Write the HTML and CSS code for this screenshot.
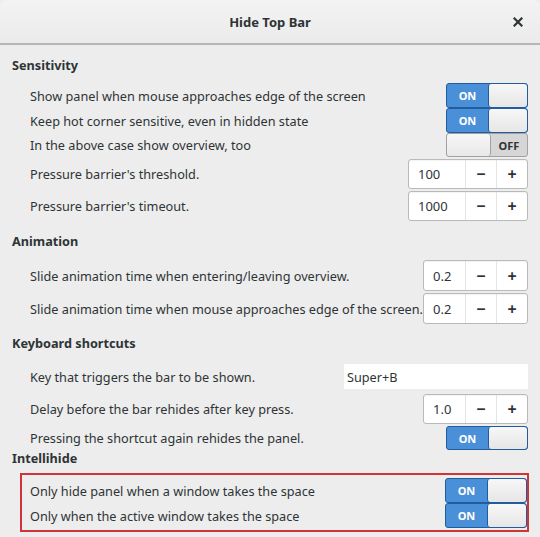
FILE: index.html
```html
<!DOCTYPE html>
<html>
<head>
<meta charset="utf-8">
<link rel="stylesheet" href="styles.css">
</head>
<body>
<div class="window">
  <div class="titlebar">
    <span class="title">Hide Top Bar</span>
    <svg class="close" width="10" height="10" viewBox="0 0 10 10"><path d="M1.5 1.5 L8.5 8.5 M8.5 1.5 L1.5 8.5" stroke="#2e3436" stroke-width="2.2" stroke-linecap="square"/></svg>
  </div>
  <div class="content">
    <div class="heading h-sens">Sensitivity</div>
    <div class="row r-sw first-sw"><span class="label">Show panel when mouse approaches edge of the screen</span><div class="switch on"><span class="slot">ON</span><span class="knob"></span></div></div>
    <div class="row r-sw"><span class="label">Keep hot corner sensitive, even in hidden state</span><div class="switch on"><span class="slot">ON</span><span class="knob"></span></div></div>
    <div class="row r-sw r-off"><span class="label">In the above case show overview, too</span><div class="switch off"><span class="knob"></span><span class="slot">OFF</span></div></div>
    <div class="row r-spin s1"><span class="label">Pressure barrier's threshold.</span><div class="spin wide"><span class="val">100</span><span class="btn">−</span><span class="btn">+</span></div></div>
    <div class="row r-spin s2"><span class="label">Pressure barrier's timeout.</span><div class="spin wide"><span class="val">1000</span><span class="btn">−</span><span class="btn">+</span></div></div>

    <div class="heading h-anim">Animation</div>
    <div class="row r-spin31 s3"><span class="label">Slide animation time when entering/leaving overview.</span><div class="spin"><span class="val">0.2</span><span class="btn">−</span><span class="btn">+</span></div></div>
    <div class="row r-spin31 s2"><span class="label">Slide animation time when mouse approaches edge of the screen.</span><div class="spin"><span class="val">0.2</span><span class="btn">−</span><span class="btn">+</span></div></div>

    <div class="heading h-key">Keyboard shortcuts</div>
    <div class="row r-entry"><span class="label">Key that triggers the bar to be shown.</span><div class="entry">Super+B</div></div>
    <div class="row r-spin s4"><span class="label">Delay before the bar rehides after key press.</span><div class="spin"><span class="val">1.0</span><span class="btn">−</span><span class="btn">+</span></div></div>
    <div class="row r-sw s2 last-sw"><span class="label">Pressing the shortcut again rehides the panel.</span><div class="switch on"><span class="slot">ON</span><span class="knob"></span></div></div>

    <div class="heading h-intel">Intellihide</div>
    <div class="highlight">
      <div class="row r-sw hl"><span class="label">Only hide panel when a window takes the space</span><div class="switch on"><span class="slot">ON</span><span class="knob"></span></div></div>
      <div class="row r-sw hl"><span class="label">Only when the active window takes the space</span><div class="switch on"><span class="slot">ON</span><span class="knob"></span></div></div>
    </div>
  </div>
</div>
</body>
</html>
```
FILE: styles.css
```css
html, body {
  margin: 0;
  padding: 0;
  background: #ededed;
}
body {
  width: 540px;
  height: 537px;
  overflow: hidden;
  font-family: "Noto Sans", "DejaVu Sans", sans-serif;
  font-size: 12.7px;
  color: #2e3436;
}
.window {
  width: 540px;
  height: 537px;
  background: #ededed;
  border-radius: 6px 6px 0 0;
  overflow: hidden;
}
.titlebar {
  height: 43px;
  border-bottom: 2px solid #b6b6b6;
  background: linear-gradient(#f3f3f3, #ebebeb);
  display: flex;
  align-items: center;
  justify-content: center;
  position: relative;
}
.title {
  font-weight: bold;
  font-size: 13px;
  color: #2e3436;
}
.close {
  position: absolute;
  right: 17px;
  top: 17px;
}
.content {
  display: flex;
  flex-direction: column;
}
.heading {
  font-weight: bold;
  padding-left: 12px;
  height: 20px;
  line-height: 20px;
}
.h-sens { margin-top: 10px; }
.h-anim { margin-top: 10px; }
.h-key { margin-top: 9px; }
.h-intel { height: 16px; line-height: 16px; }
.row {
  display: flex;
  align-items: center;
  justify-content: space-between;
  padding-left: 30px;
  padding-right: 12px;
}
.label { white-space: nowrap; }
.r-sw { height: 25px; }
.r-off { height: 24px; }
.first-sw { margin-top: 8px; }
.last-sw { height: 24px; }
.r-spin { height: 30px; }
.r-spin31 { height: 31px; }
.r-entry { height: 25px; margin-top: 11px; }
.s1 { margin-top: 2px; }
.s2 { margin-top: 2px; }
.s3 { margin-top: 9px; }
.s4 { margin-top: 5px; }

.switch {
  display: flex;
  width: 82px;
  height: 100%;
  box-sizing: border-box;
  border-radius: 3px;
  overflow: hidden;
  font-size: 11px;
  font-weight: bold;
}
.switch .slot {
  display: flex;
  align-items: center;
  justify-content: center;
}
.switch.on {
  border: 1px solid #215d9c;
  background: #4a90d9;
}
.switch.on .slot {
  width: 41px;
  color: #fff;
}
.switch.on .knob {
  flex: 1;
  background: linear-gradient(#f7f7f7, #e6e6e6);
  border-left: 1px solid #215d9c;
  border-radius: 3px;
}
.switch.off {
  border: 1px solid #a1a1a1;
  background: #d6d6d6;
}
.switch.off .knob {
  width: 43px;
  background: linear-gradient(#f7f7f7, #e8e8e8);
  border-right: 1px solid #a1a1a1;
  border-radius: 3px;
}
.switch.off .slot {
  flex: 1;
  color: #2e3436;
}

.spin {
  display: flex;
  height: 100%;
  width: 105px;
  box-sizing: border-box;
  background: #fff;
  border: 1px solid #b9b9b9;
  border-radius: 3px;
  box-shadow: inset 0 1px 1px rgba(0,0,0,0.05);
}
.spin.wide { width: 120px; }
.spin .val {
  flex: 1;
  display: flex;
  align-items: center;
  padding-left: 9px;
  font-size: 13px;
}
.spin .btn {
  width: 30px;
  display: flex;
  align-items: center;
  justify-content: center;
  border-left: 1px solid #e4e4e4;
  font-size: 16px;
  font-weight: bold;
  color: #2e3436;
}
.entry {
  width: 184px;
  height: 100%;
  box-sizing: border-box;
  background: #fff;
  display: flex;
  align-items: center;
  padding-left: 3px;
}
.highlight {
  margin: 7px 11px 0 20px;
  border: 2px solid #d0343a;
  padding: 3px 0 2px 0;
}
.row.hl {
  padding-left: 8px;
  padding-right: 0;
}
```
